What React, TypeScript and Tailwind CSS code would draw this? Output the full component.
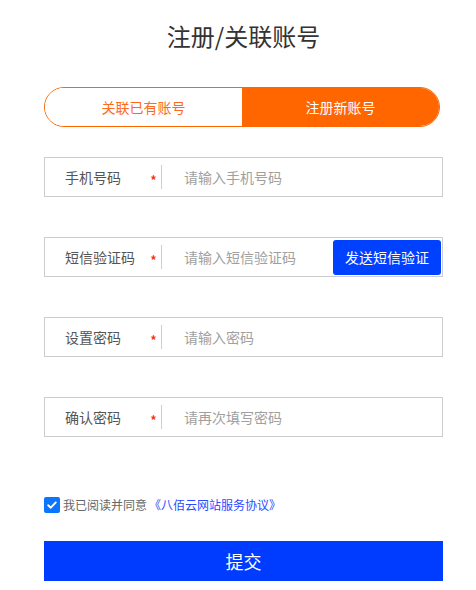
import React from "react";

const font = { fontFamily: '"Noto Sans CJK SC", "Microsoft YaHei", sans-serif' };

type FieldProps = { label: string; placeholder: string; action?: string };

function Field({ label, placeholder, action }: FieldProps) {
  return (
    <div className="flex h-10 w-[399px] items-center border border-[#cccccc] bg-white">
      <div className="flex h-full w-[117px] shrink-0 items-center pl-5">
        <span className="flex-1 text-sm text-[#555555]">{label}</span>
        <span className="mr-[4px] mt-[7px] text-[15px] leading-none text-[#ff2200]">*</span>
        <span className="h-6 w-px bg-[#cccccc]" />
      </div>
      <input
        className="h-full min-w-0 flex-1 bg-transparent pl-[22px] text-sm text-[#333] outline-none placeholder:text-[#a0a0a0]"
        placeholder={placeholder}
        style={font}
      />
      {action && (
        <button className="mr-[1px] flex h-[35px] w-[108px] shrink-0 items-center justify-center rounded-[3px] bg-[#0040ff] text-sm text-white">
          {action}
        </button>
      )}
    </div>
  );
}

export default function App() {
  return (
    <div className="flex h-[590px] w-[476px] flex-col items-start bg-white pl-11" style={font}>
      <h1 className="mt-[18px] w-[399px] text-center text-[24px] leading-9 text-[#333333]">注册/关联账号</h1>

      <div className="mt-[33px] flex h-10 w-[396px] overflow-hidden rounded-full border border-[#ff6600]">
        <div className="flex flex-1 items-center justify-center bg-white text-sm text-[#ff6a1a]">关联已有账号</div>
        <div className="flex flex-1 items-center justify-center bg-[#ff6600] text-sm text-white">注册新账号</div>
      </div>

      <div className="mt-[30px] flex flex-col gap-10">
        <Field label="手机号码" placeholder="请输入手机号码" />
        <Field label="短信验证码" placeholder="请输入短信验证码" action="发送短信验证" />
        <Field label="设置密码" placeholder="请输入密码" />
        <Field label="确认密码" placeholder="请再次填写密码" />
      </div>

      <div className="mt-[60px] flex items-center">
        <span className="flex h-4 w-4 items-center justify-center rounded-[2px] bg-[#0a75ff]">
          <svg width="12" height="12" viewBox="0 0 12 12" fill="none">
            <path d="M2.2 6.2 4.8 8.7 9.8 3.4" stroke="white" strokeWidth="1.9" strokeLinecap="round" strokeLinejoin="round" />
          </svg>
        </span>
        <span className="ml-[3px] text-xs text-[#666666]">我已阅读并同意</span>
        <span className="ml-[2px] text-xs text-[#2a4bff]">《八佰云网站服务协议》</span>
      </div>

      <button className="mt-[28px] flex h-10 w-[399px] items-center justify-center bg-[#003cff] text-lg text-white">
        提交
      </button>
    </div>
  );
}
